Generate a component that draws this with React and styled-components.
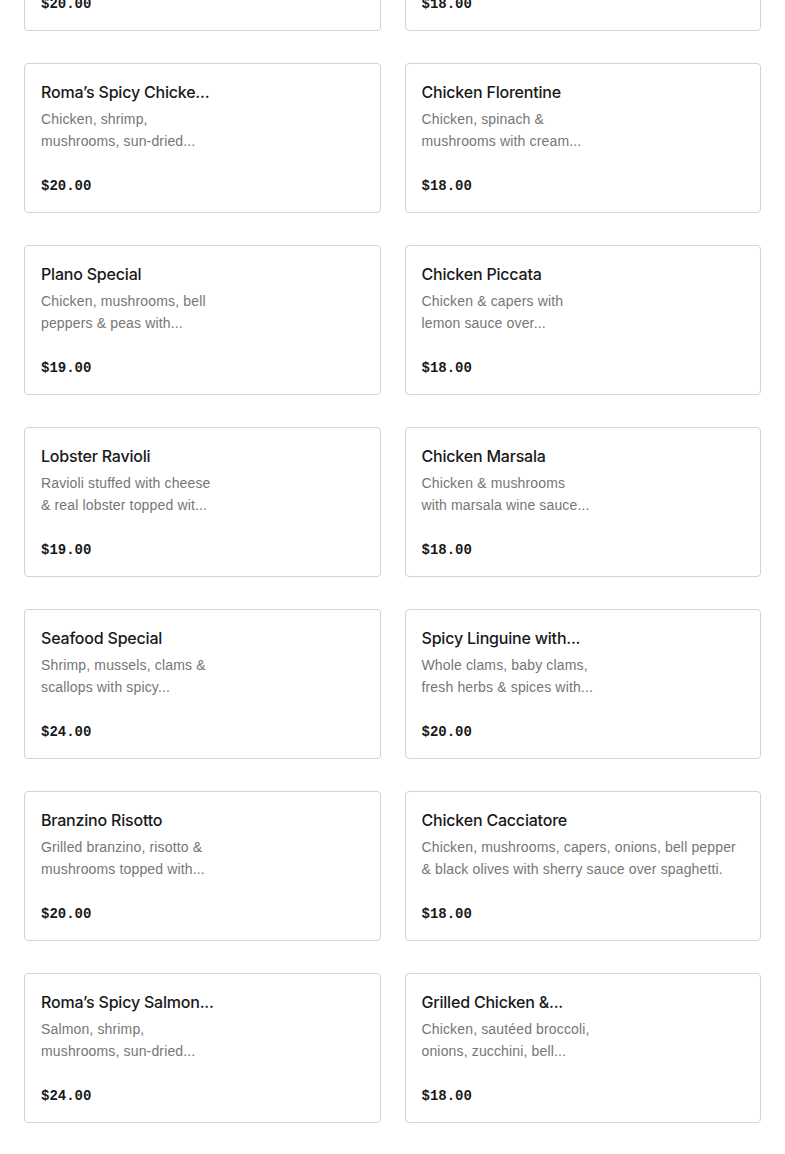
import React from 'react';
import styled, { createGlobalStyle } from 'styled-components';

const GlobalStyle = createGlobalStyle`
  html, body {
    margin: 0;
    padding: 0;
    background: #ffffff;
  }
  body {
    font-family: "Liberation Sans", Arial, sans-serif;
    overflow: hidden;
  }
`;

const items = [
  { name: 'Roma’s Spicy Pasta', desc: ['Chicken, shrimp &', 'mushrooms...'], price: '$20.00' },
  { name: 'Chicken Parmigiana', desc: ['Breaded chicken with', 'marinara...'], price: '$18.00' },
  { name: 'Roma’s Spicy Chicke...', desc: ['Chicken, shrimp,', 'mushrooms, sun-dried...'], price: '$20.00' },
  { name: 'Chicken Florentine', desc: ['Chicken, spinach &', 'mushrooms with cream...'], price: '$18.00' },
  { name: 'Plano Special', desc: ['Chicken, mushrooms, bell', 'peppers & peas with...'], price: '$19.00' },
  { name: 'Chicken Piccata', desc: ['Chicken & capers with', 'lemon sauce over...'], price: '$18.00' },
  { name: 'Lobster Ravioli', desc: ['Ravioli stuffed with cheese', '& real lobster topped wit...'], price: '$19.00' },
  { name: 'Chicken Marsala', desc: ['Chicken & mushrooms', 'with marsala wine sauce...'], price: '$18.00' },
  { name: 'Seafood Special', desc: ['Shrimp, mussels, clams &', 'scallops with spicy...'], price: '$24.00' },
  { name: 'Spicy Linguine with...', desc: ['Whole clams, baby clams,', 'fresh herbs & spices with...'], price: '$20.00' },
  { name: 'Branzino Risotto', desc: ['Grilled branzino, risotto &', 'mushrooms topped with...'], price: '$20.00' },
  {
    name: 'Chicken Cacciatore',
    desc: ['Chicken, mushrooms, capers, onions, bell pepper', '& black olives with sherry sauce over spaghetti.'],
    price: '$18.00',
  },
  { name: 'Roma’s Spicy Salmon...', desc: ['Salmon, shrimp,', 'mushrooms, sun-dried...'], price: '$24.00' },
  { name: 'Grilled Chicken &...', desc: ['Chicken, sautéed broccoli,', 'onions, zucchini, bell...'], price: '$18.00' },
];

const Page = styled.div`
  padding: 0 24px;
  margin-top: -119px;
`;

const Grid = styled.div`
  display: grid;
  grid-template-columns: 1fr 1fr;
  column-gap: 24px;
  row-gap: 32px;
`;

const Card = styled.div`
  border: 1px solid #d3d3d3;
  border-radius: 4px;
  padding: 16px;
  height: 150px;
  box-sizing: border-box;
  display: flex;
  flex-direction: column;
  background: #fff;
`;

const Title = styled.div`
  font-family: Inter, "Liberation Sans", sans-serif;
  font-size: 16px;
  font-weight: 500;
  line-height: 24px;
  color: #191919;
  white-space: nowrap;
  letter-spacing: -0.2px;
  margin-bottom: 4px;
`;

const Desc = styled.div`
  font-size: 14px;
  line-height: 22px;
  letter-spacing: 0.15px;
  color: #767676;
  height: 44px;
`;

const DescLine = styled.span`
  display: block;
  white-space: nowrap;
`;

const Price = styled.div`
  margin-top: 23px;
  font-family: "Liberation Mono", "DejaVu Sans Mono", monospace;
  font-weight: 700;
  font-size: 14px;
  line-height: 22px;
  color: #191919;
`;

const MenuCard = ({ item }) => (
  <Card>
    <Title>{item.name}</Title>
    <Desc>
      {item.desc.map((line, i) => <DescLine key={i}>{line}</DescLine>)}
    </Desc>
    <Price>{item.price}</Price>
  </Card>
);

const App = () => (
  <Page>
    <GlobalStyle />
    <Grid>
      {items.map((item, i) => <MenuCard key={i} item={item} />)}
    </Grid>
  </Page>
);

export default App;
